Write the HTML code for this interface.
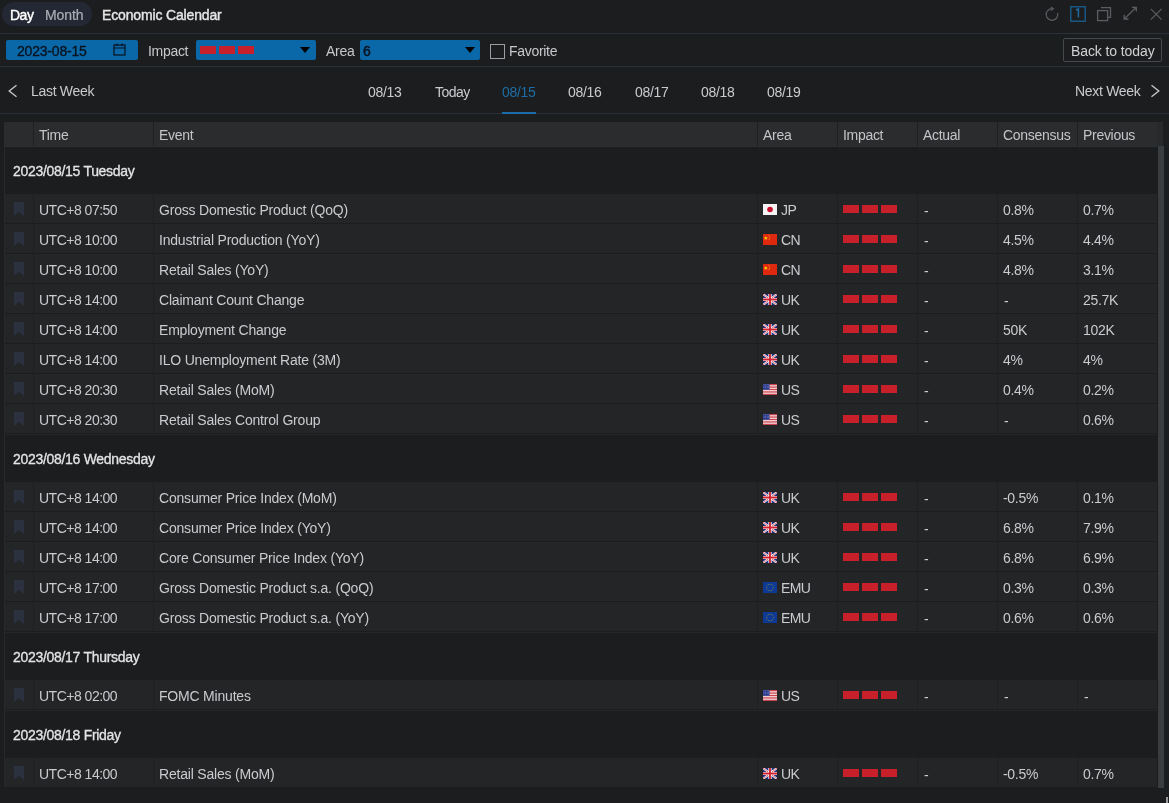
<!DOCTYPE html>
<html><head><meta charset="utf-8">
<style>
*{margin:0;padding:0;box-sizing:border-box}
html,body{width:1169px;height:803px;overflow:hidden;background:#1c1d1e;font-family:"Liberation Sans",sans-serif;color:#c9cbce}
.a{position:absolute;white-space:nowrap}
.hl{position:absolute;left:0;width:1169px;height:1px}
.pill{left:2px;top:2px;width:90px;height:24px;border-radius:12px;background:#232834}
.t{font-size:14px;line-height:16px;letter-spacing:-0.3px}
.n{letter-spacing:-0.6px}
.blue{background:#0a68a8;border-radius:2px}
.tri{width:0;height:0;border-left:5px solid transparent;border-right:5px solid transparent;border-top:6px solid #000}
.bar{position:absolute;width:16px;height:8px;background:#c8202a}
#tbl{position:absolute;left:4px;top:122px;width:1153px}
.hdr{position:absolute;left:0;top:0;width:1153px;height:24px;background:#2b2c2e}
.c{position:absolute;top:0;height:100%}
.dv{position:absolute;top:0;width:1px;height:100%;background:#1f2022}
.row{position:absolute;left:1px;width:1152px;height:30px;background:#242527;border-bottom:1px solid #1c1d1f}
.grp{position:absolute;left:1px;width:1152px;height:48px;background:#1c1d1f}
body{will-change:transform}</style></head><body>
<!-- top header -->
<div class="a pill"></div>
<div class="a t" style="left:10px;top:7px;color:#fff;-webkit-text-stroke:0.4px #fff;letter-spacing:-0.5px">Day</div>
<div class="a t" style="left:45px;top:7px;color:#acb0b6;letter-spacing:-0.1px;-webkit-text-stroke:0.2px #acb0b6">Month</div>
<div class="a t" style="left:102px;top:7px;color:#e6e6e6;-webkit-text-stroke:0.4px #e6e6e6;letter-spacing:-0.15px">Economic Calendar</div>
<div class="hl" style="top:33px;background:#2c3037"></div>

<!-- toolbar -->
<div class="a blue" style="left:6px;top:40px;width:132px;height:20px"></div>
<div class="a t" style="left:17px;top:43px;color:#08121c;-webkit-text-stroke:0.3px #08121c;letter-spacing:-0.2px">2023-08-15</div>
<div class="a t" style="left:148px;top:43px;color:#c6c8cb">Impact</div>
<div class="a blue" style="left:196px;top:40px;width:120px;height:20px"></div>
<div class="bar" style="left:200px;top:46px"></div>
<div class="bar" style="left:219px;top:46px"></div>
<div class="bar" style="left:238px;top:46px"></div>
<div class="a tri" style="left:300px;top:47px"></div>
<div class="a t" style="left:326px;top:43px;color:#c6c8cb">Area</div>
<div class="a blue" style="left:360px;top:40px;width:120px;height:20px"></div>
<div class="a t" style="left:363px;top:43px;color:#08121c;-webkit-text-stroke:0.4px #08121c">6</div>
<div class="a tri" style="left:465px;top:47px"></div>
<div class="a" style="left:490px;top:44px;width:15px;height:15px;border:1px solid #9a9da2"></div>
<div class="a t" style="left:509px;top:43px;color:#c6c8cb">Favorite</div>
<div class="a" style="left:1063px;top:38px;width:99px;height:24px;border:1px solid #45484d;border-radius:2px"></div>
<div class="a t" style="left:1071px;top:43px;color:#d0d2d4;letter-spacing:-0.1px">Back to today</div>
<div class="hl" style="top:66px;background:#2c3037"></div>

<!-- nav -->
<div class="a t" style="left:31px;top:83px">Last Week</div>
<div class="a t" style="left:368px;top:84px">08/13</div>
<div class="a t" style="left:435px;top:84px;letter-spacing:-0.5px">Today</div>
<div class="a t" style="left:502px;top:84px;color:#1d6ea8">08/15</div>
<div class="a t" style="left:568px;top:84px">08/16</div>
<div class="a t" style="left:635px;top:84px">08/17</div>
<div class="a t" style="left:701px;top:84px">08/18</div>
<div class="a t" style="left:767px;top:84px">08/19</div>
<div class="a t" style="left:1075px;top:83px">Next Week</div>
<div class="hl" style="top:113px;background:#2a2e36"></div>
<div class="a" style="left:502px;top:112px;width:34px;height:2px;background:#1a6ea8"></div>

<div id="tbl">
<div class="hdr">
<div class="dv" style="left:29px"></div>
<div class="dv" style="left:149px"></div>
<div class="dv" style="left:753px"></div>
<div class="dv" style="left:833px"></div>
<div class="dv" style="left:913px"></div>
<div class="dv" style="left:993px"></div>
<div class="dv" style="left:1073px"></div>
<div class="a t" style="left:35px;top:5px;color:#c3c5c8">Time</div>
<div class="a t" style="left:155px;top:5px;color:#c3c5c8">Event</div>
<div class="a t" style="left:759px;top:5px;color:#c3c5c8">Area</div>
<div class="a t" style="left:839px;top:5px;color:#c3c5c8">Impact</div>
<div class="a t" style="left:919px;top:5px;color:#c3c5c8">Actual</div>
<div class="a t" style="left:999px;top:5px;color:#c3c5c8">Consensus</div>
<div class="a t" style="left:1079px;top:5px;color:#c3c5c8">Previous</div>
</div>
<div class="grp" style="top:24px;border-top:1px solid #2e2f31"><div class="a t" style="left:8px;top:16px;color:#e3e4e6;-webkit-text-stroke:0.3px #e3e4e6">2023/08/15 Tuesday</div></div>
<div class="row" style="top:72px"><div class="dv" style="left:28px"></div><div class="dv" style="left:148px"></div><div class="dv" style="left:752px"></div><div class="dv" style="left:832px"></div><div class="dv" style="left:912px"></div><div class="dv" style="left:992px"></div><div class="dv" style="left:1072px"></div><svg class="a" style="left:9px;top:8px" width="10" height="14" viewBox="0 0 10 14"><path d="M0 0H10V14L5 10L0 14Z" fill="#2b313f"/></svg><div class="a t" style="left:34px;top:8px;letter-spacing:-0.5px">UTC+8 07:50</div><div class="a t" style="left:154px;top:8px;letter-spacing:-0.2px">Gross Domestic Product (QoQ)</div><div class="a" style="left:758px;top:10px;line-height:0"><svg width="14" height="11" viewBox="0 0 15 12" preserveAspectRatio="none"><rect width="15" height="12" fill="#f4f4f4"/><circle cx="7.5" cy="6" r="3" fill="#c8102e"/></svg></div><div class="a t" style="left:776px;top:8px;letter-spacing:-0.6px">JP</div><div class="bar" style="left:838px;top:11px"></div><div class="bar" style="left:857px;top:11px"></div><div class="bar" style="left:876px;top:11px"></div><div class="a t" style="left:919px;top:9px">-</div><div class="a t" style="left:998px;top:8px">0.8%</div><div class="a t" style="left:1078px;top:8px">0.7%</div></div>
<div class="row" style="top:102px"><div class="dv" style="left:28px"></div><div class="dv" style="left:148px"></div><div class="dv" style="left:752px"></div><div class="dv" style="left:832px"></div><div class="dv" style="left:912px"></div><div class="dv" style="left:992px"></div><div class="dv" style="left:1072px"></div><svg class="a" style="left:9px;top:8px" width="10" height="14" viewBox="0 0 10 14"><path d="M0 0H10V14L5 10L0 14Z" fill="#2b313f"/></svg><div class="a t" style="left:34px;top:8px;letter-spacing:-0.5px">UTC+8 10:00</div><div class="a t" style="left:154px;top:8px;letter-spacing:-0.2px">Industrial Production (YoY)</div><div class="a" style="left:758px;top:10px;line-height:0"><svg width="14" height="11" viewBox="0 0 15 12" preserveAspectRatio="none"><rect width="15" height="12" fill="#de2910"/><path d="M3 2.2l.6 1.6h1.6l-1.3 1 .5 1.6-1.4-1-1.4 1 .5-1.6-1.3-1h1.6z" fill="#ffde00"/><circle cx="6.3" cy="1.8" r=".5" fill="#ffde00"/><circle cx="7.2" cy="3.2" r=".5" fill="#ffde00"/><circle cx="7.2" cy="5" r=".5" fill="#ffde00"/><circle cx="6.3" cy="6.3" r=".5" fill="#ffde00"/></svg></div><div class="a t" style="left:776px;top:8px;letter-spacing:-0.6px">CN</div><div class="bar" style="left:838px;top:11px"></div><div class="bar" style="left:857px;top:11px"></div><div class="bar" style="left:876px;top:11px"></div><div class="a t" style="left:919px;top:9px">-</div><div class="a t" style="left:998px;top:8px">4.5%</div><div class="a t" style="left:1078px;top:8px">4.4%</div></div>
<div class="row" style="top:132px"><div class="dv" style="left:28px"></div><div class="dv" style="left:148px"></div><div class="dv" style="left:752px"></div><div class="dv" style="left:832px"></div><div class="dv" style="left:912px"></div><div class="dv" style="left:992px"></div><div class="dv" style="left:1072px"></div><svg class="a" style="left:9px;top:8px" width="10" height="14" viewBox="0 0 10 14"><path d="M0 0H10V14L5 10L0 14Z" fill="#2b313f"/></svg><div class="a t" style="left:34px;top:8px;letter-spacing:-0.5px">UTC+8 10:00</div><div class="a t" style="left:154px;top:8px;letter-spacing:-0.2px">Retail Sales (YoY)</div><div class="a" style="left:758px;top:10px;line-height:0"><svg width="14" height="11" viewBox="0 0 15 12" preserveAspectRatio="none"><rect width="15" height="12" fill="#de2910"/><path d="M3 2.2l.6 1.6h1.6l-1.3 1 .5 1.6-1.4-1-1.4 1 .5-1.6-1.3-1h1.6z" fill="#ffde00"/><circle cx="6.3" cy="1.8" r=".5" fill="#ffde00"/><circle cx="7.2" cy="3.2" r=".5" fill="#ffde00"/><circle cx="7.2" cy="5" r=".5" fill="#ffde00"/><circle cx="6.3" cy="6.3" r=".5" fill="#ffde00"/></svg></div><div class="a t" style="left:776px;top:8px;letter-spacing:-0.6px">CN</div><div class="bar" style="left:838px;top:11px"></div><div class="bar" style="left:857px;top:11px"></div><div class="bar" style="left:876px;top:11px"></div><div class="a t" style="left:919px;top:9px">-</div><div class="a t" style="left:998px;top:8px">4.8%</div><div class="a t" style="left:1078px;top:8px">3.1%</div></div>
<div class="row" style="top:162px"><div class="dv" style="left:28px"></div><div class="dv" style="left:148px"></div><div class="dv" style="left:752px"></div><div class="dv" style="left:832px"></div><div class="dv" style="left:912px"></div><div class="dv" style="left:992px"></div><div class="dv" style="left:1072px"></div><svg class="a" style="left:9px;top:8px" width="10" height="14" viewBox="0 0 10 14"><path d="M0 0H10V14L5 10L0 14Z" fill="#2b313f"/></svg><div class="a t" style="left:34px;top:8px;letter-spacing:-0.5px">UTC+8 14:00</div><div class="a t" style="left:154px;top:8px;letter-spacing:-0.2px">Claimant Count Change</div><div class="a" style="left:758px;top:10px;line-height:0"><svg width="14" height="11" viewBox="0 0 60 48" preserveAspectRatio="none"><rect width="60" height="48" fill="#1f2f78"/><path d="M0 0L60 48M60 0L0 48" stroke="#fff" stroke-width="9"/><path d="M0 0L60 48M60 0L0 48" stroke="#d0212e" stroke-width="3"/><path d="M30 0V48M0 24H60" stroke="#fff" stroke-width="14"/><path d="M30 0V48M0 24H60" stroke="#d0212e" stroke-width="8"/></svg></div><div class="a t" style="left:776px;top:8px;letter-spacing:-0.6px">UK</div><div class="bar" style="left:838px;top:11px"></div><div class="bar" style="left:857px;top:11px"></div><div class="bar" style="left:876px;top:11px"></div><div class="a t" style="left:919px;top:9px">-</div><div class="a t" style="left:999px;top:9px">-</div><div class="a t" style="left:1078px;top:8px">25.7K</div></div>
<div class="row" style="top:192px"><div class="dv" style="left:28px"></div><div class="dv" style="left:148px"></div><div class="dv" style="left:752px"></div><div class="dv" style="left:832px"></div><div class="dv" style="left:912px"></div><div class="dv" style="left:992px"></div><div class="dv" style="left:1072px"></div><svg class="a" style="left:9px;top:8px" width="10" height="14" viewBox="0 0 10 14"><path d="M0 0H10V14L5 10L0 14Z" fill="#2b313f"/></svg><div class="a t" style="left:34px;top:8px;letter-spacing:-0.5px">UTC+8 14:00</div><div class="a t" style="left:154px;top:8px;letter-spacing:-0.2px">Employment Change</div><div class="a" style="left:758px;top:10px;line-height:0"><svg width="14" height="11" viewBox="0 0 60 48" preserveAspectRatio="none"><rect width="60" height="48" fill="#1f2f78"/><path d="M0 0L60 48M60 0L0 48" stroke="#fff" stroke-width="9"/><path d="M0 0L60 48M60 0L0 48" stroke="#d0212e" stroke-width="3"/><path d="M30 0V48M0 24H60" stroke="#fff" stroke-width="14"/><path d="M30 0V48M0 24H60" stroke="#d0212e" stroke-width="8"/></svg></div><div class="a t" style="left:776px;top:8px;letter-spacing:-0.6px">UK</div><div class="bar" style="left:838px;top:11px"></div><div class="bar" style="left:857px;top:11px"></div><div class="bar" style="left:876px;top:11px"></div><div class="a t" style="left:919px;top:9px">-</div><div class="a t" style="left:998px;top:8px">50K</div><div class="a t" style="left:1078px;top:8px">102K</div></div>
<div class="row" style="top:222px"><div class="dv" style="left:28px"></div><div class="dv" style="left:148px"></div><div class="dv" style="left:752px"></div><div class="dv" style="left:832px"></div><div class="dv" style="left:912px"></div><div class="dv" style="left:992px"></div><div class="dv" style="left:1072px"></div><svg class="a" style="left:9px;top:8px" width="10" height="14" viewBox="0 0 10 14"><path d="M0 0H10V14L5 10L0 14Z" fill="#2b313f"/></svg><div class="a t" style="left:34px;top:8px;letter-spacing:-0.5px">UTC+8 14:00</div><div class="a t" style="left:154px;top:8px;letter-spacing:-0.2px">ILO Unemployment Rate (3M)</div><div class="a" style="left:758px;top:10px;line-height:0"><svg width="14" height="11" viewBox="0 0 60 48" preserveAspectRatio="none"><rect width="60" height="48" fill="#1f2f78"/><path d="M0 0L60 48M60 0L0 48" stroke="#fff" stroke-width="9"/><path d="M0 0L60 48M60 0L0 48" stroke="#d0212e" stroke-width="3"/><path d="M30 0V48M0 24H60" stroke="#fff" stroke-width="14"/><path d="M30 0V48M0 24H60" stroke="#d0212e" stroke-width="8"/></svg></div><div class="a t" style="left:776px;top:8px;letter-spacing:-0.6px">UK</div><div class="bar" style="left:838px;top:11px"></div><div class="bar" style="left:857px;top:11px"></div><div class="bar" style="left:876px;top:11px"></div><div class="a t" style="left:919px;top:9px">-</div><div class="a t" style="left:998px;top:8px">4%</div><div class="a t" style="left:1078px;top:8px">4%</div></div>
<div class="row" style="top:252px"><div class="dv" style="left:28px"></div><div class="dv" style="left:148px"></div><div class="dv" style="left:752px"></div><div class="dv" style="left:832px"></div><div class="dv" style="left:912px"></div><div class="dv" style="left:992px"></div><div class="dv" style="left:1072px"></div><svg class="a" style="left:9px;top:8px" width="10" height="14" viewBox="0 0 10 14"><path d="M0 0H10V14L5 10L0 14Z" fill="#2b313f"/></svg><div class="a t" style="left:34px;top:8px;letter-spacing:-0.5px">UTC+8 20:30</div><div class="a t" style="left:154px;top:8px;letter-spacing:-0.2px">Retail Sales (MoM)</div><div class="a" style="left:758px;top:10px;line-height:0"><svg width="14" height="11" viewBox="0 0 15 12" preserveAspectRatio="none"><rect width="15" height="12" fill="#fff"/><rect y="0.000" width="15" height="0.923" fill="#c0232f"/><rect y="1.846" width="15" height="0.923" fill="#c0232f"/><rect y="3.692" width="15" height="0.923" fill="#c0232f"/><rect y="5.538" width="15" height="0.923" fill="#c0232f"/><rect y="7.384" width="15" height="0.923" fill="#c0232f"/><rect y="9.230" width="15" height="0.923" fill="#c0232f"/><rect y="11.076" width="15" height="0.923" fill="#c0232f"/><rect width="7" height="6.5" fill="#2c3b8c"/><circle cx="1.00" cy="0.90" r=".35" fill="#dfe3f5"/><circle cx="2.70" cy="0.90" r=".35" fill="#dfe3f5"/><circle cx="4.40" cy="0.90" r=".35" fill="#dfe3f5"/><circle cx="6.10" cy="0.90" r=".35" fill="#dfe3f5"/><circle cx="1.00" cy="2.50" r=".35" fill="#dfe3f5"/><circle cx="2.70" cy="2.50" r=".35" fill="#dfe3f5"/><circle cx="4.40" cy="2.50" r=".35" fill="#dfe3f5"/><circle cx="6.10" cy="2.50" r=".35" fill="#dfe3f5"/><circle cx="1.00" cy="4.10" r=".35" fill="#dfe3f5"/><circle cx="2.70" cy="4.10" r=".35" fill="#dfe3f5"/><circle cx="4.40" cy="4.10" r=".35" fill="#dfe3f5"/><circle cx="6.10" cy="4.10" r=".35" fill="#dfe3f5"/><circle cx="1.00" cy="5.70" r=".35" fill="#dfe3f5"/><circle cx="2.70" cy="5.70" r=".35" fill="#dfe3f5"/><circle cx="4.40" cy="5.70" r=".35" fill="#dfe3f5"/><circle cx="6.10" cy="5.70" r=".35" fill="#dfe3f5"/></svg></div><div class="a t" style="left:776px;top:8px;letter-spacing:-0.6px">US</div><div class="bar" style="left:838px;top:11px"></div><div class="bar" style="left:857px;top:11px"></div><div class="bar" style="left:876px;top:11px"></div><div class="a t" style="left:919px;top:9px">-</div><div class="a t" style="left:998px;top:8px">0.4%</div><div class="a t" style="left:1078px;top:8px">0.2%</div></div>
<div class="row" style="top:282px"><div class="dv" style="left:28px"></div><div class="dv" style="left:148px"></div><div class="dv" style="left:752px"></div><div class="dv" style="left:832px"></div><div class="dv" style="left:912px"></div><div class="dv" style="left:992px"></div><div class="dv" style="left:1072px"></div><svg class="a" style="left:9px;top:8px" width="10" height="14" viewBox="0 0 10 14"><path d="M0 0H10V14L5 10L0 14Z" fill="#2b313f"/></svg><div class="a t" style="left:34px;top:8px;letter-spacing:-0.5px">UTC+8 20:30</div><div class="a t" style="left:154px;top:8px;letter-spacing:-0.2px">Retail Sales Control Group</div><div class="a" style="left:758px;top:10px;line-height:0"><svg width="14" height="11" viewBox="0 0 15 12" preserveAspectRatio="none"><rect width="15" height="12" fill="#fff"/><rect y="0.000" width="15" height="0.923" fill="#c0232f"/><rect y="1.846" width="15" height="0.923" fill="#c0232f"/><rect y="3.692" width="15" height="0.923" fill="#c0232f"/><rect y="5.538" width="15" height="0.923" fill="#c0232f"/><rect y="7.384" width="15" height="0.923" fill="#c0232f"/><rect y="9.230" width="15" height="0.923" fill="#c0232f"/><rect y="11.076" width="15" height="0.923" fill="#c0232f"/><rect width="7" height="6.5" fill="#2c3b8c"/><circle cx="1.00" cy="0.90" r=".35" fill="#dfe3f5"/><circle cx="2.70" cy="0.90" r=".35" fill="#dfe3f5"/><circle cx="4.40" cy="0.90" r=".35" fill="#dfe3f5"/><circle cx="6.10" cy="0.90" r=".35" fill="#dfe3f5"/><circle cx="1.00" cy="2.50" r=".35" fill="#dfe3f5"/><circle cx="2.70" cy="2.50" r=".35" fill="#dfe3f5"/><circle cx="4.40" cy="2.50" r=".35" fill="#dfe3f5"/><circle cx="6.10" cy="2.50" r=".35" fill="#dfe3f5"/><circle cx="1.00" cy="4.10" r=".35" fill="#dfe3f5"/><circle cx="2.70" cy="4.10" r=".35" fill="#dfe3f5"/><circle cx="4.40" cy="4.10" r=".35" fill="#dfe3f5"/><circle cx="6.10" cy="4.10" r=".35" fill="#dfe3f5"/><circle cx="1.00" cy="5.70" r=".35" fill="#dfe3f5"/><circle cx="2.70" cy="5.70" r=".35" fill="#dfe3f5"/><circle cx="4.40" cy="5.70" r=".35" fill="#dfe3f5"/><circle cx="6.10" cy="5.70" r=".35" fill="#dfe3f5"/></svg></div><div class="a t" style="left:776px;top:8px;letter-spacing:-0.6px">US</div><div class="bar" style="left:838px;top:11px"></div><div class="bar" style="left:857px;top:11px"></div><div class="bar" style="left:876px;top:11px"></div><div class="a t" style="left:919px;top:9px">-</div><div class="a t" style="left:999px;top:9px">-</div><div class="a t" style="left:1078px;top:8px">0.6%</div></div>
<div class="grp" style="top:312px;border-top:1px solid #252628"><div class="a t" style="left:8px;top:16px;color:#e3e4e6;-webkit-text-stroke:0.3px #e3e4e6">2023/08/16 Wednesday</div></div>
<div class="row" style="top:360px"><div class="dv" style="left:28px"></div><div class="dv" style="left:148px"></div><div class="dv" style="left:752px"></div><div class="dv" style="left:832px"></div><div class="dv" style="left:912px"></div><div class="dv" style="left:992px"></div><div class="dv" style="left:1072px"></div><svg class="a" style="left:9px;top:8px" width="10" height="14" viewBox="0 0 10 14"><path d="M0 0H10V14L5 10L0 14Z" fill="#2b313f"/></svg><div class="a t" style="left:34px;top:8px;letter-spacing:-0.5px">UTC+8 14:00</div><div class="a t" style="left:154px;top:8px;letter-spacing:-0.2px">Consumer Price Index (MoM)</div><div class="a" style="left:758px;top:10px;line-height:0"><svg width="14" height="11" viewBox="0 0 60 48" preserveAspectRatio="none"><rect width="60" height="48" fill="#1f2f78"/><path d="M0 0L60 48M60 0L0 48" stroke="#fff" stroke-width="9"/><path d="M0 0L60 48M60 0L0 48" stroke="#d0212e" stroke-width="3"/><path d="M30 0V48M0 24H60" stroke="#fff" stroke-width="14"/><path d="M30 0V48M0 24H60" stroke="#d0212e" stroke-width="8"/></svg></div><div class="a t" style="left:776px;top:8px;letter-spacing:-0.6px">UK</div><div class="bar" style="left:838px;top:11px"></div><div class="bar" style="left:857px;top:11px"></div><div class="bar" style="left:876px;top:11px"></div><div class="a t" style="left:919px;top:9px">-</div><div class="a t" style="left:998px;top:8px">-0.5%</div><div class="a t" style="left:1078px;top:8px">0.1%</div></div>
<div class="row" style="top:390px"><div class="dv" style="left:28px"></div><div class="dv" style="left:148px"></div><div class="dv" style="left:752px"></div><div class="dv" style="left:832px"></div><div class="dv" style="left:912px"></div><div class="dv" style="left:992px"></div><div class="dv" style="left:1072px"></div><svg class="a" style="left:9px;top:8px" width="10" height="14" viewBox="0 0 10 14"><path d="M0 0H10V14L5 10L0 14Z" fill="#2b313f"/></svg><div class="a t" style="left:34px;top:8px;letter-spacing:-0.5px">UTC+8 14:00</div><div class="a t" style="left:154px;top:8px;letter-spacing:-0.2px">Consumer Price Index (YoY)</div><div class="a" style="left:758px;top:10px;line-height:0"><svg width="14" height="11" viewBox="0 0 60 48" preserveAspectRatio="none"><rect width="60" height="48" fill="#1f2f78"/><path d="M0 0L60 48M60 0L0 48" stroke="#fff" stroke-width="9"/><path d="M0 0L60 48M60 0L0 48" stroke="#d0212e" stroke-width="3"/><path d="M30 0V48M0 24H60" stroke="#fff" stroke-width="14"/><path d="M30 0V48M0 24H60" stroke="#d0212e" stroke-width="8"/></svg></div><div class="a t" style="left:776px;top:8px;letter-spacing:-0.6px">UK</div><div class="bar" style="left:838px;top:11px"></div><div class="bar" style="left:857px;top:11px"></div><div class="bar" style="left:876px;top:11px"></div><div class="a t" style="left:919px;top:9px">-</div><div class="a t" style="left:998px;top:8px">6.8%</div><div class="a t" style="left:1078px;top:8px">7.9%</div></div>
<div class="row" style="top:420px"><div class="dv" style="left:28px"></div><div class="dv" style="left:148px"></div><div class="dv" style="left:752px"></div><div class="dv" style="left:832px"></div><div class="dv" style="left:912px"></div><div class="dv" style="left:992px"></div><div class="dv" style="left:1072px"></div><svg class="a" style="left:9px;top:8px" width="10" height="14" viewBox="0 0 10 14"><path d="M0 0H10V14L5 10L0 14Z" fill="#2b313f"/></svg><div class="a t" style="left:34px;top:8px;letter-spacing:-0.5px">UTC+8 14:00</div><div class="a t" style="left:154px;top:8px;letter-spacing:-0.2px">Core Consumer Price Index (YoY)</div><div class="a" style="left:758px;top:10px;line-height:0"><svg width="14" height="11" viewBox="0 0 60 48" preserveAspectRatio="none"><rect width="60" height="48" fill="#1f2f78"/><path d="M0 0L60 48M60 0L0 48" stroke="#fff" stroke-width="9"/><path d="M0 0L60 48M60 0L0 48" stroke="#d0212e" stroke-width="3"/><path d="M30 0V48M0 24H60" stroke="#fff" stroke-width="14"/><path d="M30 0V48M0 24H60" stroke="#d0212e" stroke-width="8"/></svg></div><div class="a t" style="left:776px;top:8px;letter-spacing:-0.6px">UK</div><div class="bar" style="left:838px;top:11px"></div><div class="bar" style="left:857px;top:11px"></div><div class="bar" style="left:876px;top:11px"></div><div class="a t" style="left:919px;top:9px">-</div><div class="a t" style="left:998px;top:8px">6.8%</div><div class="a t" style="left:1078px;top:8px">6.9%</div></div>
<div class="row" style="top:450px"><div class="dv" style="left:28px"></div><div class="dv" style="left:148px"></div><div class="dv" style="left:752px"></div><div class="dv" style="left:832px"></div><div class="dv" style="left:912px"></div><div class="dv" style="left:992px"></div><div class="dv" style="left:1072px"></div><svg class="a" style="left:9px;top:8px" width="10" height="14" viewBox="0 0 10 14"><path d="M0 0H10V14L5 10L0 14Z" fill="#2b313f"/></svg><div class="a t" style="left:34px;top:8px;letter-spacing:-0.5px">UTC+8 17:00</div><div class="a t" style="left:154px;top:8px;letter-spacing:-0.2px">Gross Domestic Product s.a. (QoQ)</div><div class="a" style="left:758px;top:10px;line-height:0"><svg width="14" height="11" viewBox="0 0 15 12" preserveAspectRatio="none"><rect width="15" height="12" fill="#0e3a95"/><circle cx="11.10" cy="6.00" r=".45" fill="#d6b800"/><circle cx="10.62" cy="7.80" r=".45" fill="#d6b800"/><circle cx="9.30" cy="9.12" r=".45" fill="#d6b800"/><circle cx="7.50" cy="9.60" r=".45" fill="#d6b800"/><circle cx="5.70" cy="9.12" r=".45" fill="#d6b800"/><circle cx="4.38" cy="7.80" r=".45" fill="#d6b800"/><circle cx="3.90" cy="6.00" r=".45" fill="#d6b800"/><circle cx="4.38" cy="4.20" r=".45" fill="#d6b800"/><circle cx="5.70" cy="2.88" r=".45" fill="#d6b800"/><circle cx="7.50" cy="2.40" r=".45" fill="#d6b800"/><circle cx="9.30" cy="2.88" r=".45" fill="#d6b800"/><circle cx="10.62" cy="4.20" r=".45" fill="#d6b800"/></svg></div><div class="a t" style="left:776px;top:8px;letter-spacing:-0.6px">EMU</div><div class="bar" style="left:838px;top:11px"></div><div class="bar" style="left:857px;top:11px"></div><div class="bar" style="left:876px;top:11px"></div><div class="a t" style="left:919px;top:9px">-</div><div class="a t" style="left:998px;top:8px">0.3%</div><div class="a t" style="left:1078px;top:8px">0.3%</div></div>
<div class="row" style="top:480px"><div class="dv" style="left:28px"></div><div class="dv" style="left:148px"></div><div class="dv" style="left:752px"></div><div class="dv" style="left:832px"></div><div class="dv" style="left:912px"></div><div class="dv" style="left:992px"></div><div class="dv" style="left:1072px"></div><svg class="a" style="left:9px;top:8px" width="10" height="14" viewBox="0 0 10 14"><path d="M0 0H10V14L5 10L0 14Z" fill="#2b313f"/></svg><div class="a t" style="left:34px;top:8px;letter-spacing:-0.5px">UTC+8 17:00</div><div class="a t" style="left:154px;top:8px;letter-spacing:-0.2px">Gross Domestic Product s.a. (YoY)</div><div class="a" style="left:758px;top:10px;line-height:0"><svg width="14" height="11" viewBox="0 0 15 12" preserveAspectRatio="none"><rect width="15" height="12" fill="#0e3a95"/><circle cx="11.10" cy="6.00" r=".45" fill="#d6b800"/><circle cx="10.62" cy="7.80" r=".45" fill="#d6b800"/><circle cx="9.30" cy="9.12" r=".45" fill="#d6b800"/><circle cx="7.50" cy="9.60" r=".45" fill="#d6b800"/><circle cx="5.70" cy="9.12" r=".45" fill="#d6b800"/><circle cx="4.38" cy="7.80" r=".45" fill="#d6b800"/><circle cx="3.90" cy="6.00" r=".45" fill="#d6b800"/><circle cx="4.38" cy="4.20" r=".45" fill="#d6b800"/><circle cx="5.70" cy="2.88" r=".45" fill="#d6b800"/><circle cx="7.50" cy="2.40" r=".45" fill="#d6b800"/><circle cx="9.30" cy="2.88" r=".45" fill="#d6b800"/><circle cx="10.62" cy="4.20" r=".45" fill="#d6b800"/></svg></div><div class="a t" style="left:776px;top:8px;letter-spacing:-0.6px">EMU</div><div class="bar" style="left:838px;top:11px"></div><div class="bar" style="left:857px;top:11px"></div><div class="bar" style="left:876px;top:11px"></div><div class="a t" style="left:919px;top:9px">-</div><div class="a t" style="left:998px;top:8px">0.6%</div><div class="a t" style="left:1078px;top:8px">0.6%</div></div>
<div class="grp" style="top:510px;border-top:1px solid #252628"><div class="a t" style="left:8px;top:16px;color:#e3e4e6;-webkit-text-stroke:0.3px #e3e4e6">2023/08/17 Thursday</div></div>
<div class="row" style="top:558px"><div class="dv" style="left:28px"></div><div class="dv" style="left:148px"></div><div class="dv" style="left:752px"></div><div class="dv" style="left:832px"></div><div class="dv" style="left:912px"></div><div class="dv" style="left:992px"></div><div class="dv" style="left:1072px"></div><svg class="a" style="left:9px;top:8px" width="10" height="14" viewBox="0 0 10 14"><path d="M0 0H10V14L5 10L0 14Z" fill="#2b313f"/></svg><div class="a t" style="left:34px;top:8px;letter-spacing:-0.5px">UTC+8 02:00</div><div class="a t" style="left:154px;top:8px;letter-spacing:-0.2px">FOMC Minutes</div><div class="a" style="left:758px;top:10px;line-height:0"><svg width="14" height="11" viewBox="0 0 15 12" preserveAspectRatio="none"><rect width="15" height="12" fill="#fff"/><rect y="0.000" width="15" height="0.923" fill="#c0232f"/><rect y="1.846" width="15" height="0.923" fill="#c0232f"/><rect y="3.692" width="15" height="0.923" fill="#c0232f"/><rect y="5.538" width="15" height="0.923" fill="#c0232f"/><rect y="7.384" width="15" height="0.923" fill="#c0232f"/><rect y="9.230" width="15" height="0.923" fill="#c0232f"/><rect y="11.076" width="15" height="0.923" fill="#c0232f"/><rect width="7" height="6.5" fill="#2c3b8c"/><circle cx="1.00" cy="0.90" r=".35" fill="#dfe3f5"/><circle cx="2.70" cy="0.90" r=".35" fill="#dfe3f5"/><circle cx="4.40" cy="0.90" r=".35" fill="#dfe3f5"/><circle cx="6.10" cy="0.90" r=".35" fill="#dfe3f5"/><circle cx="1.00" cy="2.50" r=".35" fill="#dfe3f5"/><circle cx="2.70" cy="2.50" r=".35" fill="#dfe3f5"/><circle cx="4.40" cy="2.50" r=".35" fill="#dfe3f5"/><circle cx="6.10" cy="2.50" r=".35" fill="#dfe3f5"/><circle cx="1.00" cy="4.10" r=".35" fill="#dfe3f5"/><circle cx="2.70" cy="4.10" r=".35" fill="#dfe3f5"/><circle cx="4.40" cy="4.10" r=".35" fill="#dfe3f5"/><circle cx="6.10" cy="4.10" r=".35" fill="#dfe3f5"/><circle cx="1.00" cy="5.70" r=".35" fill="#dfe3f5"/><circle cx="2.70" cy="5.70" r=".35" fill="#dfe3f5"/><circle cx="4.40" cy="5.70" r=".35" fill="#dfe3f5"/><circle cx="6.10" cy="5.70" r=".35" fill="#dfe3f5"/></svg></div><div class="a t" style="left:776px;top:8px;letter-spacing:-0.6px">US</div><div class="bar" style="left:838px;top:11px"></div><div class="bar" style="left:857px;top:11px"></div><div class="bar" style="left:876px;top:11px"></div><div class="a t" style="left:919px;top:9px">-</div><div class="a t" style="left:999px;top:9px">-</div><div class="a t" style="left:1079px;top:9px">-</div></div>
<div class="grp" style="top:588px;border-top:1px solid #252628"><div class="a t" style="left:8px;top:16px;color:#e3e4e6;-webkit-text-stroke:0.3px #e3e4e6">2023/08/18 Friday</div></div>
<div class="row" style="top:636px"><div class="dv" style="left:28px"></div><div class="dv" style="left:148px"></div><div class="dv" style="left:752px"></div><div class="dv" style="left:832px"></div><div class="dv" style="left:912px"></div><div class="dv" style="left:992px"></div><div class="dv" style="left:1072px"></div><svg class="a" style="left:9px;top:8px" width="10" height="14" viewBox="0 0 10 14"><path d="M0 0H10V14L5 10L0 14Z" fill="#2b313f"/></svg><div class="a t" style="left:34px;top:8px;letter-spacing:-0.5px">UTC+8 14:00</div><div class="a t" style="left:154px;top:8px;letter-spacing:-0.2px">Retail Sales (MoM)</div><div class="a" style="left:758px;top:10px;line-height:0"><svg width="14" height="11" viewBox="0 0 60 48" preserveAspectRatio="none"><rect width="60" height="48" fill="#1f2f78"/><path d="M0 0L60 48M60 0L0 48" stroke="#fff" stroke-width="9"/><path d="M0 0L60 48M60 0L0 48" stroke="#d0212e" stroke-width="3"/><path d="M30 0V48M0 24H60" stroke="#fff" stroke-width="14"/><path d="M30 0V48M0 24H60" stroke="#d0212e" stroke-width="8"/></svg></div><div class="a t" style="left:776px;top:8px;letter-spacing:-0.6px">UK</div><div class="bar" style="left:838px;top:11px"></div><div class="bar" style="left:857px;top:11px"></div><div class="bar" style="left:876px;top:11px"></div><div class="a t" style="left:919px;top:9px">-</div><div class="a t" style="left:998px;top:8px">-0.5%</div><div class="a t" style="left:1078px;top:8px">0.7%</div></div>
</div>
<div class="a" style="left:4px;top:146px;width:1px;height:641px;background:#28292b"></div>
<div class="a" style="left:1166px;top:797px;width:2px;height:6px;background:#9a9c9e"></div>
<div class="a" style="left:1157px;top:122px;width:6px;height:24px;background:#28292b"></div>
<div class="a" style="left:1158px;top:146px;width:6px;height:642px;background:#3a3d3f"></div>
<svg class="a" style="left:1040px;top:0px" width="129" height="30" viewBox="0 0 129 30">
<path d="M12 8.7A5.8 5.8 0 1 0 17.6 13" fill="none" stroke="#5a5d61" stroke-width="1.2"/>
<path d="M10.9 6.9L13.4 8.7L10.9 10.5" fill="none" stroke="#5a5d61" stroke-width="1.2"/>
<rect x="30.75" y="6.75" width="14.5" height="14.5" fill="none" stroke="#195782" stroke-width="1.5"/>
<path d="M36 10.3L38.4 8.9V17.4" fill="none" stroke="#1f6798" stroke-width="1.6"/>
<rect x="57.6" y="10.6" width="10" height="10" fill="none" stroke="#5a5d61" stroke-width="1.3"/>
<path d="M61 7.6H70.5V17.4H67.6" fill="none" stroke="#5a5d61" stroke-width="1.3"/>
<path d="M84.2 19L96.3 7.3M92 7.3H96.3V11.6M84.2 14.8V19H88.4" fill="none" stroke="#5a5d61" stroke-width="1.3"/>
<path d="M110.8 8.8L121.6 19.6M121.6 8.8L110.8 19.6" fill="none" stroke="#5a5d61" stroke-width="1.2"/>
</svg>
<svg class="a" style="left:113px;top:43px" width="13" height="13" viewBox="0 0 13 13">
<rect x="1" y="2" width="11" height="10" fill="none" stroke="#07111d" stroke-width="1.2"/>
<path d="M1 5H12M4 0.5V3M9 0.5V3" stroke="#07111d" stroke-width="1.2"/></svg>
<svg class="a" style="left:8px;top:84px" width="10" height="14" viewBox="0 0 10 14"><path d="M8.5 1.2L1.2 7L8.5 12.8" fill="none" stroke="#c9cbce" stroke-width="1.3"/></svg>
<svg class="a" style="left:1150px;top:84px" width="10" height="14" viewBox="0 0 10 14"><path d="M1.5 1.2L8.8 7L1.5 12.8" fill="none" stroke="#c9cbce" stroke-width="1.3"/></svg>
</body></html>
